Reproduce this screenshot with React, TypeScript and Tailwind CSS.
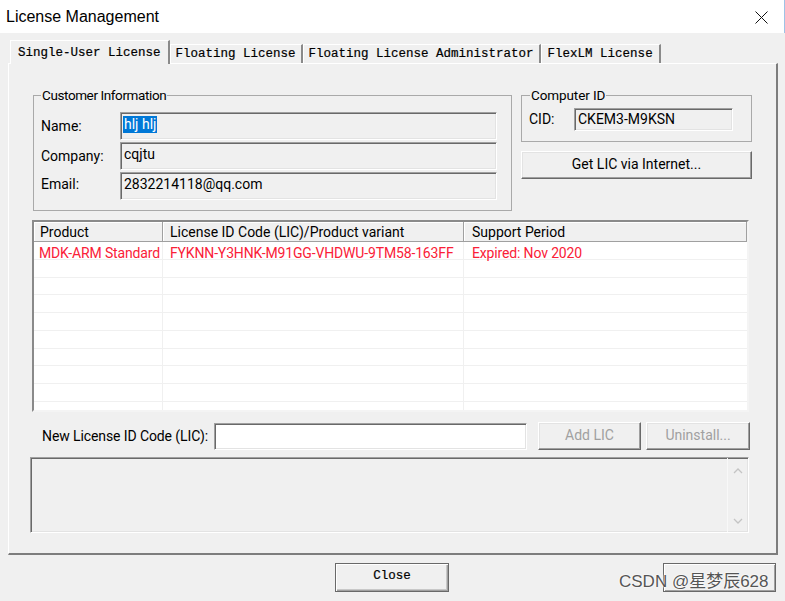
import React from "react";

const ui = { fontFamily: "Roboto, 'Liberation Sans', Arial, sans-serif" };
const mono = { fontFamily: "'Liberation Mono', 'Courier New', monospace" };

const sunken =
  "border border-t-[#a0a0a0] border-l-[#a0a0a0] border-r-white border-b-white shadow-[inset_1px_1px_0_#696969,inset_-1px_-1px_0_#e3e3e3]";
const raised =
  "border border-t-white border-l-white border-r-[#696969] border-b-[#696969] shadow-[inset_-1px_-1px_0_#a0a0a0,inset_1px_1px_0_#e3e3e3]";

function Field({ label, value, selected, labelClass = "" }: { label: string; value: string; selected?: boolean; labelClass?: string }) {
  return (
    <div className="flex items-center h-[28px]">
      <div className={`w-[79px] text-[14px] leading-[16px] ${labelClass}`}>{label}</div>
      <div className={`w-[377px] h-[28px] bg-[#f0f0f0] flex items-center pl-[2px] pb-[3px] text-[14px] ${sunken}`}>
        {selected ? (
          <span className="bg-[#0078d7] text-white leading-[17px] px-[1px]">{value}</span>
        ) : (
          <span className="leading-[17px] px-[1px]">{value}</span>
        )}
      </div>
    </div>
  );
}

export default function App() {
  const rows = Array.from({ length: 10 });

  return (
    <div className="relative w-[785px] h-[601px] bg-[#f0f0f0] overflow-hidden text-black" style={ui}>
      {/* Title bar */}
      <div className="h-[33px] bg-white flex items-center justify-between pl-[6px] pr-[16px] border-r border-r-[#9ec3e6]">
        <span className="text-[16px] leading-[20px]" style={{ fontFamily: "'Liberation Sans', Arial, sans-serif" }}>
          License Management
        </span>
        <svg width="13" height="13" viewBox="0 0 13 13" className="mt-[2px]">
          <path d="M0.5 0.5 L12.5 12.5 M12.5 0.5 L0.5 12.5" stroke="#111" strokeWidth="1" fill="none" />
        </svg>
      </div>

      {/* Tabs */}
      <div
        className="mt-[7px] ml-[8px] flex items-end h-[23px] pl-[2px] relative z-10 text-[12.5px] [-webkit-text-stroke:0.2px_#000]"
        style={mono}
      >
        <div className="h-[24px] -mb-px px-[7px] pt-[4px] bg-[#f0f0f0] border-t border-l border-white border-r-2 border-r-[#8a8a8a] leading-[16px]">
          Single-User License
        </div>
        <div className="h-[19px] px-[5px] pt-[1px] border-t border-l border-white border-r-2 border-r-[#8a8a8a] leading-[17px]">
          Floating License
        </div>
        <div className="h-[19px] px-[5px] pt-[1px] border-t border-l border-white border-r-2 border-r-[#8a8a8a] leading-[17px]">
          Floating License Administrator
        </div>
        <div className="h-[19px] px-[6px] pt-[1px] border-t border-l border-white border-r-2 border-r-[#8a8a8a] leading-[17px]">
          FlexLM License
        </div>
      </div>

      {/* Tab panel */}
      <div className="ml-[8px] w-[770px] h-[492px] border-t border-l border-white border-r-2 border-b-2 border-r-[#7d7d7d] border-b-[#7d7d7d] pl-[21px] pt-[23px]">
        <div className="flex items-start">
          {/* Customer Information */}
          <fieldset className="ml-[3px] w-[479px] h-[124px] border border-[#a9a9a9] pl-[7px] pr-[14px] pb-[10px]">
            <legend className="px-[1px] text-[13.5px] tracking-[-0.4px] leading-[16px]">Customer Information</legend>
            <div className="pt-[9px] flex flex-col gap-[2px]">
              <Field label="Name:" value="hlj hlj" selected />
              <Field label="Company:" value="cqjtu" />
              <Field label="Email:" value="2832214118@qq.com" labelClass="self-start mt-[4px]" />
            </div>
          </fieldset>

          {/* Right column */}
          <div className="ml-[9px] w-[231px] flex flex-col">
            <fieldset className="h-[55px] border border-[#a9a9a9] pl-[7px] pr-[17px]">
              <legend className="ml-[1px] px-[1px] text-[13.5px] tracking-[-0.1px] leading-[16px]">Computer ID</legend>
              <div className="flex items-center mt-[5px] h-[23px]">
                <div className="w-[45px] text-[14px] leading-[16px] -mt-[2px]">CID:</div>
                <div className={`w-[159px] h-[23px] bg-[#f0f0f0] flex items-center pl-[3px] text-[14px] ${sunken}`}>
                  CKEM3-M9KSN
                </div>
              </div>
            </fieldset>
            <button className={`mt-[9px] h-[28px] w-[231px] bg-[#f0f0f0] text-[14px] leading-[16px] pb-[2px] ${raised}`}>
              Get LIC via Internet...
            </button>
          </div>
        </div>

        {/* License table */}
        <div className="mt-[9px] ml-[2px] w-[717px] h-[192px] bg-white overflow-hidden border-2 border-t-[#8a8a8a] border-l-[#8a8a8a] border-r-[#f4f4f4] border-b-[#f4f4f4] text-[14px] whitespace-nowrap">
          <div className="flex h-[20px] bg-[#f0f0f0]">
            <div className="w-[129px] pl-[6px] pt-[2px] leading-[17px] border-r border-b border-[#a0a0a0] shadow-[inset_1px_1px_0_white]">Product</div>
            <div className="w-[301px] pl-[7px] pt-[2px] leading-[17px] border-r border-b border-[#a0a0a0] shadow-[inset_1px_1px_0_white]">
              License ID Code (LIC)/Product variant
            </div>
            <div className="w-[283px] pl-[8px] pt-[2px] leading-[17px] border-r border-b border-[#a0a0a0] shadow-[inset_1px_1px_0_white]">Support Period</div>
          </div>
          {rows.map((_, i) => (
            <div key={i} className="flex h-[17.75px] text-[#fa2037] tracking-[-0.15px]">
              <div className="w-[129px] pl-[5px] pt-[3px] leading-[16px] border-r border-b border-[#f0f0f0] overflow-hidden">
                {i === 0 ? "MDK-ARM Standard" : ""}
              </div>
              <div className="w-[301px] pl-[7px] pt-[3px] leading-[16px] border-r border-b border-[#f0f0f0]">
                {i === 0 ? "FYKNN-Y3HNK-M91GG-VHDWU-9TM58-163FF" : ""}
              </div>
              <div className="w-[283px] pl-[8px] pt-[3px] leading-[16px] border-b border-[#f0f0f0]">{i === 0 ? "Expired: Nov 2020" : ""}</div>
            </div>
          ))}
        </div>

        {/* New LIC row */}
        <div className="mt-[10px] flex items-center h-[28px]">
          <div className="ml-[12px] w-[172px] text-[14px] leading-[16px] tracking-[-0.1px]">New License ID Code (LIC):</div>
          <div className={`w-[313px] h-[27px] bg-white ${sunken}`} />
          <button className={`ml-[11px] w-[103px] h-[28px] bg-[#f0f0f0] text-[14px] text-[#a0a0a0] pb-[2px] ${raised}`}>Add LIC</button>
          <button className={`ml-[5px] w-[104px] h-[28px] bg-[#f0f0f0] text-[14px] text-[#a0a0a0] pb-[2px] ${raised}`}>Uninstall...</button>
        </div>

        {/* Log area */}
        <div className={`mt-[7px] w-[719px] h-[76px] bg-[#f0f0f0] flex justify-end ${sunken}`}>
          <div className="w-[21px] h-full border-l border-[#f8f8f8] flex flex-col items-center justify-between pt-[10px] pb-[8px]">
            <svg width="10" height="6" viewBox="0 0 10 6">
              <path d="M1 5 L5 1 L9 5" stroke="#c4c4c4" strokeWidth="1.3" fill="none" />
            </svg>
            <svg width="10" height="6" viewBox="0 0 10 6">
              <path d="M1 1 L5 5 L9 1" stroke="#c4c4c4" strokeWidth="1.3" fill="none" />
            </svg>
          </div>
        </div>
      </div>

      {/* Bottom buttons */}
      <div className="mt-[8px] flex justify-between pl-[335px] pr-[9px]">
        <button
          className="w-[114px] h-[29px] bg-[#f0f0f0] border border-[#696969] shadow-[inset_1px_1px_0_white,inset_-1px_-1px_0_#a0a0a0,inset_-2px_-2px_0_#c8c8c8] text-[12.5px] pb-[2px] [-webkit-text-stroke:0.2px_#000]"
          style={mono}
        >
          Close
        </button>
        <button className="w-[113px] h-[29px] bg-[#f0f0f0] border border-[#696969] shadow-[inset_1px_1px_0_white,inset_-1px_-1px_0_#a0a0a0]" />
      </div>

      {/* Watermark */}
      <div
        className="absolute left-[619px] top-[572px] text-[17px] leading-[20px] text-[#555] whitespace-nowrap [text-shadow:0_0_2px_white,0_0_2px_white]"
        style={{ fontFamily: "'Liberation Sans', 'Noto Sans CJK SC', sans-serif" }}
      >
        CSDN @星梦辰628
      </div>
    </div>
  );
}
